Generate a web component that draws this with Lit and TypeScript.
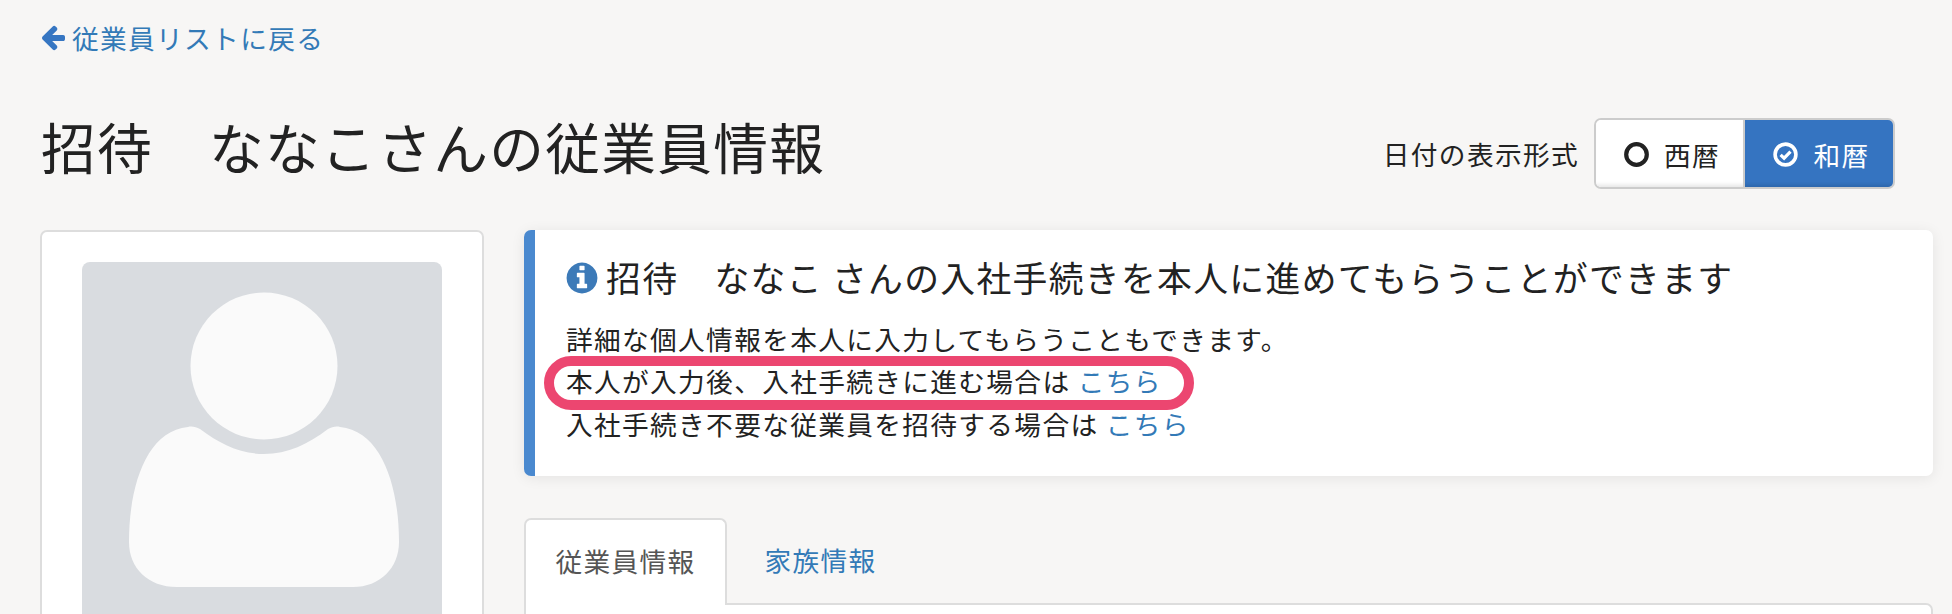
import { LitElement, html, css } from "lit";
import { customElement } from "lit/decorators.js";

@customElement("app-root")
export class AppRoot extends LitElement {
  static styles = css`
    :host {
      display: block;
      height: 614px;
      overflow: hidden;
      background: #f7f6f5;
      color: #222;
      font-family: "Noto Sans CJK JP", "Liberation Sans", sans-serif;
      font-size: 26.7px;
      letter-spacing: 0.05em;
    }
    * { box-sizing: border-box; }
    .page { padding: 18px 19px 0 40px; }
    a { color: #337ab7; text-decoration: none; }
    .back { display: flex; align-items: center; gap: 5px; height: 38px; color: #337ab7; }
    .back svg { width: 28px; height: 28px; fill: #3676c2; flex: none; margin-left: -1px; }
    .head { display: flex; justify-content: space-between; align-items: center; height: 71px; margin-top: 62px; margin-right: 38px; }
    h1 { margin: 0 0 0 1px; font-weight: 400; font-size: 54.7px; line-height: 71px; position: relative; top: -8px; }
    .fmt { display: flex; align-items: center; gap: 15px; }
    .group { display: flex; height: 71px; border: 2px solid #ccc; border-radius: 7px; overflow: hidden; }
    .opt { display: flex; align-items: center; justify-content: center; gap: 15px; height: 100%; padding: 2px 0 0 5px; }
    .opt svg { width: 25px; height: 25px; flex: none; }
    .off { width: 149px; background: #fff; box-shadow: inset 0 -5px 4px -3px #e4e4e4; border-right: 2px solid #ccc; }
    .on { width: 148px; background: #3574c1; color: #fff; box-shadow: inset 0 -5px 4px -3px #2c64a8; }
    .main { display: grid; grid-template-columns: 444px 1fr; gap: 40px; margin-top: 41px; }
    .card { background: #fff; border: 2px solid #ddd; border-radius: 7px; padding: 30px 40px 0; height: 500px; }
    .photo { display: block; width: 360px; height: 460px; }
    .alert { height: 246px; background: #fff; border-left: 11px solid #4a89cf; border-radius: 7px; box-shadow: 0 2px 14px rgba(0, 0, 0, 0.08); padding: 25px 32px 0 32px; }
    .alert-title { display: flex; align-items: center; gap: 6px; font-size: 34.8px; line-height: 44px; height: 44px; }
    .alert-title svg { width: 36px; height: 36px; fill: #3c7ab8; flex: none; margin: 2px 0 0 -3px; }
    .lines { margin: 19px 0 0 -1px; line-height: 42.3px; }
    .mark { position: relative; }
    .oval { position: absolute; left: -22px; top: -4px; width: 650px; height: 54px; border: 10px solid #ec4670; border-radius: 27px; }
    .tabs { display: flex; height: 69px; margin-top: 42px; align-items: stretch; position: relative; }
    .tab { height: 87px; width: 203px; display: flex; align-items: center; justify-content: center; padding: 0 0 5px; }
    .tab.active { background: #fff; border: 2px solid #ddd; border-bottom: 0; border-radius: 7px 7px 0 0; color: #555; position: relative; z-index: 1; }
    .tab.link { width: 187px; }
    .panel { height: 40px; background: #fff; border: 2px solid #ddd; border-radius: 0 7px 0 0; margin-top: 16px; }
  `;

  render() {
    return html`
      <div class="page">
        <a class="back" href="#">
          <svg viewBox="0 0 1792 1792"><path d="M1664 896v128q0 53-32.5 90.5t-84.5 37.5h-704l293 294q38 36 38 90t-38 90l-75 76q-37 37-90 37-52 0-91-37l-651-652q-37-37-37-90 0-52 37-91l651-650q38-38 91-38 52 0 90 38l75 74q38 38 38 91t-38 91l-293 293h704q52 0 84.5 37.5t32.5 90.5z"/></svg>
          <span>従業員リストに戻る</span>
        </a>
        <div class="head">
          <h1>招待　ななこさんの従業員情報</h1>
          <div class="fmt">
            <span>日付の表示形式</span>
            <div class="group">
              <div class="opt off">
                <svg viewBox="0 0 25 25"><circle cx="12.5" cy="12.5" r="10.3" fill="none" stroke="#222" stroke-width="4.2"/></svg>
                <span>西暦</span>
              </div>
              <div class="opt on">
                <svg viewBox="0 0 25 25"><circle cx="12.5" cy="12.5" r="10.4" fill="none" stroke="#fff" stroke-width="3.6"/><path d="M7.6 12.8l3.5 3.4 6.4-6.5" fill="none" stroke="#fff" stroke-width="3.2"/></svg>
                <span>和暦</span>
              </div>
            </div>
          </div>
        </div>
        <div class="main">
          <div class="card">
            <svg class="photo" viewBox="0 0 360 460">
              <rect width="360" height="460" rx="8" fill="#d9dce0"/>
              <circle cx="182" cy="104" r="73.5" fill="#fafafa"/>
              <path d="M106 165 C110 164 114 165 118 167 C138 182 158 192 182 192 C206 192 226 182 246 167 C250 165 254 164 258 165 C300 169 317 225 317 280 C317 306 298 325 271 325 L95 325 C66 325 47 306 47 280 C47 225 64 169 106 165 Z" fill="#fafafa"/>
            </svg>
          </div>
          <div>
            <div class="alert">
              <div class="alert-title">
                <svg viewBox="0 0 1792 1792"><path d="M1152 1376v-160q0-14-9-23t-23-9h-96v-512q0-14-9-23t-23-9h-320q-14 0-23 9t-9 23v160q0 14 9 23t23 9h96v320h-96q-14 0-23 9t-9 23v160q0 14 9 23t23 9h448q14 0 23-9t9-23zm-128-896v-160q0-14-9-23t-23-9h-192q-14 0-23 9t-9 23v160q0 14 9 23t23 9h192q14 0 23-9t9-23zm640 416q0 209-103 385.5t-279.5 279.5-385.5 103-385.5-103-279.5-279.5-103-385.5 103-385.5 279.5-279.5 385.5-103 385.5 103 279.5 279.5 103 385.5z"/></svg>
                <span>招待　ななこ さんの入社手続きを本人に進めてもらうことができます</span>
              </div>
              <div class="lines">
                <div>詳細な個人情報を本人に入力してもらうこともできます。</div>
                <div class="mark">本人が入力後、入社手続きに進む場合は <a href="#">こちら</a><span class="oval"></span></div>
                <div>入社手続き不要な従業員を招待する場合は <a href="#">こちら</a></div>
              </div>
            </div>
            <div class="tabs">
              <div class="tab active">従業員情報</div>
              <a class="tab link" href="#">家族情報</a>
            </div>
            <div class="panel"></div>
          </div>
        </div>
      </div>
    `;
  }
}
